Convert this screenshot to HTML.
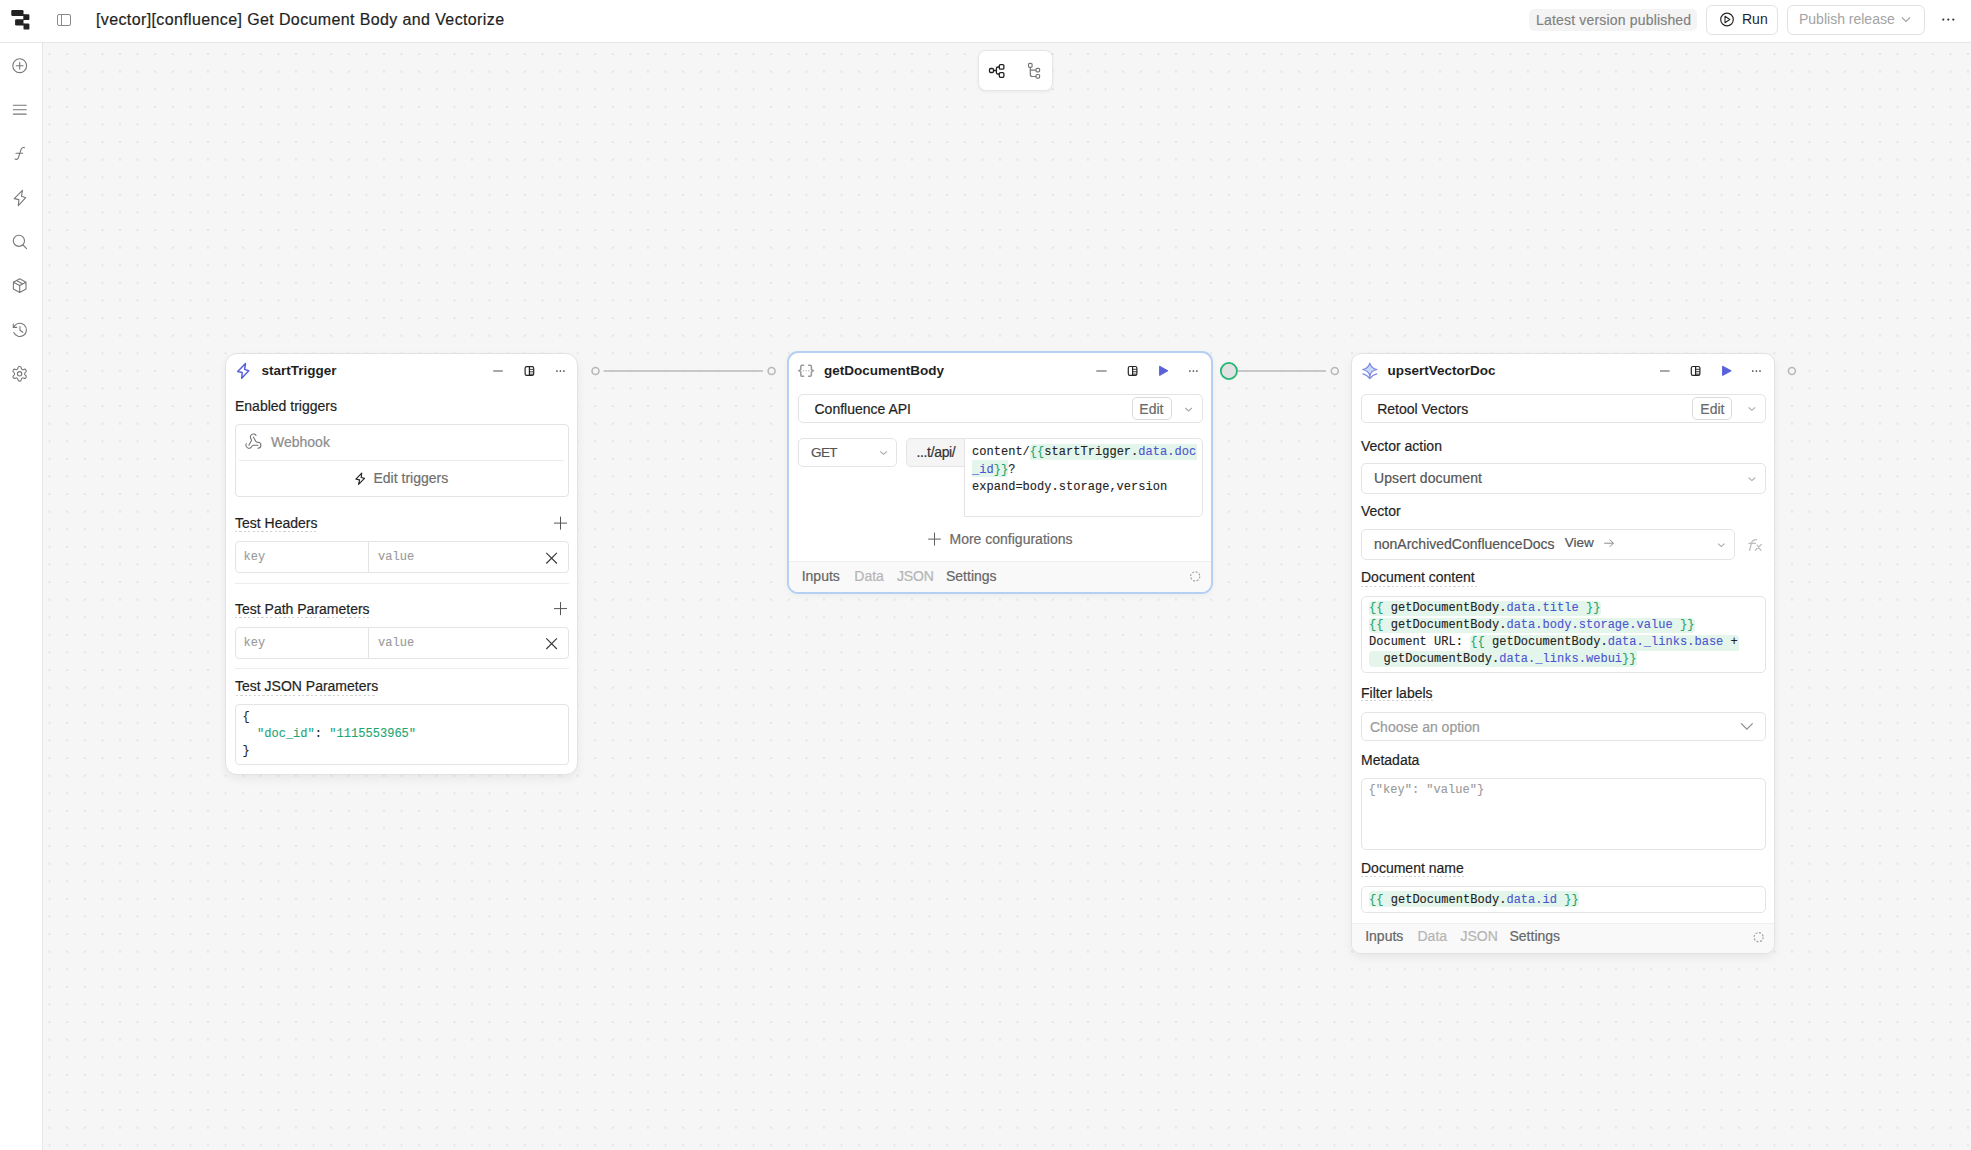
<!DOCTYPE html>
<html><head><meta charset="utf-8">
<style>
*{box-sizing:border-box;margin:0;padding:0}
html,body{width:1971px;height:1150px;overflow:hidden}
body{position:relative;background:#f6f6f6;font-family:"Liberation Sans",sans-serif;color:#1f1f1f;font-size:14px}
.a{position:absolute}
.t{position:absolute;white-space:pre;line-height:20px}
.m{font-family:"Liberation Mono",monospace;font-size:12px;letter-spacing:0.03px;-webkit-text-stroke:0.12px currentColor}
.node{position:absolute;background:#fff;border:1px solid #e2e2e2;border-radius:10px;box-shadow:0 4px 10px rgba(0,0,0,0.06)}
.box{position:absolute;border:1px solid #e4e4e4;border-radius:4px;background:#fff}
.lbl{position:absolute;white-space:pre;line-height:20px;font-size:14px;color:#1f1f1f;-webkit-text-stroke:0.2px currentColor}
.ul{position:absolute;height:1px;background:repeating-linear-gradient(90deg,#d2d2d2 0 2.2px,transparent 2.2px 4.4px)}
.sep{position:absolute;height:1px;background:#ececec}
.g{color:#1ea672}
.b{color:#4a55d0}
.hl{background:#e4f5eb;border-radius:3px}
svg{position:absolute;overflow:visible;z-index:5}
</style></head>
<body>
<!-- canvas dots -->
<svg class="a" style="left:0;top:0;z-index:0" width="1971" height="1150">
<defs><pattern id="dots" x="40.8" y="45.2" width="17.6" height="17.6" patternUnits="userSpaceOnUse"><circle cx="8.8" cy="8.8" r="0.85" fill="#d3d3d3"/></pattern></defs>
<rect x="43" y="43" width="1928" height="1107" fill="url(#dots)"/>
</svg>

<!-- header -->
<div class="a" style="left:0;top:0;width:1971px;height:43px;background:#fff;border-bottom:1px solid #e6e6e6"></div>
<svg style="left:0;top:0" width="40" height="40">
<g fill="#222">
<rect x="11.3" y="10.1" width="12.2" height="5.9" rx="1.2"/>
<rect x="23.3" y="14.3" width="6.1" height="5.8" rx="1.2"/>
<rect x="15.1" y="19.3" width="8.4" height="6.1" rx="1.2"/>
<rect x="23.5" y="23.5" width="5.9" height="6.1" rx="1.2"/>
<rect x="22.5" y="14.3" width="2" height="1.7"/>
<rect x="22.5" y="19.3" width="2" height="0.8"/>
<rect x="22.5" y="23.5" width="2" height="1.9"/>
</g>
</svg>
<svg style="left:0;top:0" width="80" height="40">
<rect x="57.5" y="14.5" width="13" height="11" rx="1.5" fill="none" stroke="#8a8a8a" stroke-width="1"/>
<line x1="61.5" y1="14.5" x2="61.5" y2="25.5" stroke="#8a8a8a" stroke-width="1"/>
</svg>
<div class="t" style="left:96px;top:9.7px;font-size:16px;letter-spacing:0.38px;color:#1f1f1f;-webkit-text-stroke:0.2px #1f1f1f">[vector][confluence] Get Document Body and Vectorize</div>

<!-- header right -->
<div class="a" style="left:1529px;top:9px;width:168px;height:22px;background:#f4f4f4;border-radius:5px"></div>
<div class="t" style="left:1536px;top:10px;font-size:14px;color:#808080;letter-spacing:0.18px;-webkit-text-stroke:0.15px #808080">Latest version published</div>
<div class="a" style="left:1706px;top:5px;width:72px;height:30px;border:1px solid #e2e2e2;border-radius:6px;background:#fff"></div>
<svg style="left:0;top:0" width="1800" height="40">
<circle cx="1727" cy="19.5" r="6.3" fill="none" stroke="#2a2a2a" stroke-width="1.2"/>
<path d="M1725 16.3 L1729.8 19.5 L1725 22.7 Z" fill="none" stroke="#2a2a2a" stroke-width="1.1" stroke-linejoin="round"/>
</svg>
<div class="t" style="left:1742px;top:9px;font-size:14px;color:#1f1f1f">Run</div>
<div class="a" style="left:1787px;top:5px;width:138px;height:30px;border:1px solid #e2e2e2;border-radius:6px;background:#fff"></div>
<div class="t" style="left:1799px;top:9px;font-size:14px;color:#a3a3a3">Publish release</div>
<svg style="left:0;top:0" width="1971" height="40">
<path d="M1902 17.5 L1906 21.5 L1910 17.5" fill="none" stroke="#a3a3a3" stroke-width="1.1"/>
<circle cx="1943.3" cy="19.6" r="1.1" fill="#333"/><circle cx="1948.3" cy="19.6" r="1.1" fill="#333"/><circle cx="1953.3" cy="19.6" r="1.1" fill="#333"/>
</svg>

<!-- sidebar -->
<div class="a" style="left:0;top:43px;width:43px;height:1107px;background:#fff;border-right:1px solid #e6e6e6"></div>
<svg style="left:0;top:0" width="43" height="400">
<g fill="none" stroke="#777" stroke-width="1.1" stroke-linecap="round" stroke-linejoin="round">
<circle cx="19.7" cy="65.7" r="6.9"/><path d="M19.7 62.3v6.8M16.3 65.7h6.8"/>
<path d="M13.3 105.3h12.9M13.3 109.7h12.9M13.3 114.1h12.9"/>
<path d="M24.5 147.8c-1.3-0.6-2.8 0-3.3 1.3l-2.8 8.6c-0.5 1.5-2 2.1-3.4 1.4M16 153.3h6.7"/>
<path d="M22.4 190.4L14.2 198.6L18.9 199.6L18.3 205.6L25.7 197.7L21.5 196.3Z"/>
<circle cx="18.9" cy="240.8" r="5.6"/><path d="M23 245l3.6 3.6"/>
<path d="M19.7 278.8l6.3 3.4v6.9l-6.3 3.4-6.3-3.4v-6.9z M13.4 282.2l6.3 3.4 6.3-3.4 M19.7 285.6v6.9 M16.5 280.5l6.3 3.4"/>
<path d="M14.3 326.3a6.6 6.6 0 1 1-0.5 6.2 M13.3 324v3.4h3.4 M20 326.5v3.8l2.7 2"/>
<g transform="translate(10.8 365) scale(0.735)" stroke-width="1.5"><path d="M12.22 2h-.44a2 2 0 0 0-2 2v.18a2 2 0 0 1-1 1.73l-.43.25a2 2 0 0 1-2 0l-.15-.08a2 2 0 0 0-2.73.73l-.22.38a2 2 0 0 0 .73 2.73l.15.1a2 2 0 0 1 1 1.72v.51a2 2 0 0 1-1 1.74l-.15.09a2 2 0 0 0-.73 2.730l.22.38a2 2 0 0 0 2.73.73l.15-.08a2 2 0 0 1 2 0l.43.25a2 2 0 0 1 1 1.73V20a2 2 0 0 0 2 2h.44a2 2 0 0 0 2-2v-.18a2 2 0 0 1 1-1.73l.43-.25a2 2 0 0 1 2 0l.15.08a2 2 0 0 0 2.73-.73l.22-.39a2 2 0 0 0-.73-2.73l-.15-.08a2 2 0 0 1-1-1.74v-.5a2 2 0 0 1 1-1.74l.15-.09a2 2 0 0 0 .73-2.73l-.22-.38a2 2 0 0 0-2.73-.73l-.15.08a2 2 0 0 1-2 0l-.43-.25a2 2 0 0 1-1-1.73V4a2 2 0 0 0-2-2z"/><circle cx="12" cy="12" r="3"/></g>
</g>
</svg>

<!-- top toolbar -->
<div class="a" style="left:977.5px;top:50px;width:75px;height:40.5px;background:#fff;border:1px solid #e6e6e6;border-radius:8px;box-shadow:0 1px 3px rgba(0,0,0,0.06)"></div>
<svg style="left:0;top:0" width="1100" height="100">
<g fill="none" stroke="#1f1f1f" stroke-width="1.3" stroke-linejoin="round">
<rect x="989.5" y="68.5" width="4" height="4" rx="1.2"/>
<rect x="999.3" y="64.6" width="4.6" height="4.6" rx="1.2"/>
<rect x="999.3" y="72.7" width="4.6" height="4.6" rx="1.2"/>
<path d="M993.5 70.5h2.2M999.3 67h-1.3a1.6 1.6 0 0 0-1.6 1.6v3.8a1.6 1.6 0 0 0 1.6 1.6h1.3"/>
</g>
<g fill="none" stroke="#777" stroke-width="1.2" stroke-linejoin="round">
<rect x="1028.5" y="63.3" width="3.6" height="4" rx="1.1"/>
<rect x="1036" y="68.3" width="3.6" height="3.6" rx="1.1"/>
<rect x="1036" y="74.5" width="3.6" height="3.6" rx="1.1"/>
<path d="M1030.3 67.3v7.2a2 2 0 0 0 2 2h3.7M1030.3 70.2h5.7"/>
</g>
</svg>

<!-- connectors -->
<svg style="left:0;top:0" width="1971" height="400">
<g fill="#f6f6f6" stroke="#b8b8b8">
<circle cx="595.5" cy="371" r="3.5" stroke-width="1.6"/>
<line x1="603.6" y1="371" x2="763" y2="371" stroke-width="1.7"/>
<circle cx="771.6" cy="371" r="3.5" stroke-width="1.6"/>
<line x1="1237.5" y1="371" x2="1326" y2="371" stroke-width="1.6"/>
<circle cx="1334.8" cy="371" r="3.5" stroke-width="1.6"/>
<circle cx="1791.9" cy="371" r="3.5" stroke-width="1.6"/>
</g>
<circle cx="1228.9" cy="371" r="8.1" fill="#e2e2e2" stroke="#22b573" stroke-width="1.8"/>
</svg>


<!-- NODE 1: startTrigger -->
<div class="node" style="left:225px;top:353px;width:353px;height:422px;border-radius:12px"></div>
<svg style="left:0;top:0" width="600" height="800">
<path d="M245.5 363.6 L237.7 371.6 L242.2 372.5 L241.7 378.2 L248.7 370.7 L244.6 369.4 Z" fill="none" stroke="#5560d8" stroke-width="1.5" stroke-linejoin="round"/>
<line x1="493.2" y1="371" x2="502.8" y2="371" stroke="#6e6e6e" stroke-width="1.2"/>
<rect x="525.1" y="366.6" width="8.6" height="8.8" rx="1.6" fill="none" stroke="#262626" stroke-width="1.2"/>
<line x1="529.4" y1="366.6" x2="529.4" y2="375.4" stroke="#262626" stroke-width="1.2"/>
<path d="M529.4 369.4h4.3M529.4 371.8h4.3M529.4 374.2h4.3" stroke="#262626" stroke-width="0.9"/>
<circle cx="556.9" cy="371" r="0.85" fill="#333"/><circle cx="560.4" cy="371" r="0.85" fill="#333"/><circle cx="563.9" cy="371" r="0.85" fill="#333"/>
</svg>
<div class="t" style="left:261.5px;top:361.3px;font-size:13.5px;font-weight:bold;color:#1f1f1f">startTrigger</div>
<div class="lbl" style="left:235px;top:396.3px">Enabled triggers</div>
<div class="box" style="left:235px;top:423.5px;width:334px;height:73px"></div>
<div class="sep" style="left:239px;top:460.2px;width:325px;background:#ebebeb"></div>
<svg style="left:0;top:0" width="600" height="800">
<g fill="none" stroke="#6f6f6f" stroke-width="1.4" stroke-linecap="round" stroke-linejoin="round" transform="translate(244.4 432.5) scale(0.75)">
<path d="M18 16.98h-5.99c-1.1 0-1.95.94-2.48 1.9A4 4 0 0 1 2 17c.01-.7.2-1.4.57-2"/>
<path d="m6 17 3.13-5.78c.53-.97.1-2.18-.5-3.1a4 4 0 1 1 6.89-4.06"/>
<path d="m12 6 3.13 5.73C15.66 12.7 16.9 13 18 13a4 4 0 0 1 0 8"/>
</g>
<path d="M361.7 473.1 L355.9 479.1 L359.6 479.9 L358.6 484.3 L364.5 478.3 L361.2 477.5 Z" fill="none" stroke="#2a2a2a" stroke-width="1.2" stroke-linejoin="round"/>
</svg>
<div class="lbl" style="left:271px;top:431.6px;color:#8c8c8c">Webhook</div>
<div class="lbl" style="left:373.5px;top:467.8px;color:#6f6f6f">Edit triggers</div>

<div class="lbl" style="left:235px;top:513px">Test Headers</div>
<div class="ul" style="left:235px;top:531px;width:84px"></div>
<svg style="left:0;top:0" width="600" height="800">
<path d="M560.5 516.6v13M554 523.1h13" stroke="#555" stroke-width="1"/>
<path d="M546.3 552.9l10.6 10.6M556.9 552.9l-10.6 10.6" stroke="#3a3a3a" stroke-width="1.15"/>
<path d="M560.5 602.1v13M554 608.6h13" stroke="#555" stroke-width="1"/>
<path d="M546.3 638.4l10.6 10.6M556.9 638.4l-10.6 10.6" stroke="#3a3a3a" stroke-width="1.15"/>
</svg>
<div class="box" style="left:235px;top:541px;width:334px;height:32px"></div>
<div class="a" style="left:368px;top:542px;width:1px;height:30px;background:#e4e4e4"></div>
<div class="t m" style="left:243.6px;top:548.5px;line-height:17px;color:#9a9a9a">key</div>
<div class="t m" style="left:378px;top:548.7px;line-height:17px;color:#9a9a9a">value</div>
<div class="sep" style="left:235px;top:582.5px;width:334px"></div>

<div class="lbl" style="left:235px;top:598.8px">Test Path Parameters</div>
<div class="ul" style="left:235px;top:617px;width:136px"></div>
<div class="box" style="left:235px;top:627px;width:334px;height:32px"></div>
<div class="a" style="left:368px;top:628px;width:1px;height:30px;background:#e4e4e4"></div>
<div class="t m" style="left:243.6px;top:634.5px;line-height:17px;color:#9a9a9a">key</div>
<div class="t m" style="left:378px;top:634.7px;line-height:17px;color:#9a9a9a">value</div>
<div class="sep" style="left:235px;top:668.3px;width:334px"></div>

<div class="lbl" style="left:235px;top:676.3px">Test JSON Parameters</div>
<div class="ul" style="left:236px;top:694.5px;width:140px"></div>
<div class="box" style="left:235px;top:704px;width:334px;height:61px"></div>
<div class="t m" style="left:242.5px;top:709px;line-height:17px;color:#1f1f1f">{
  <span class="g">"doc_id"</span>: <span class="g">"1115553965"</span>
}</div>


<!-- NODE 2: getDocumentBody -->
<div class="a" style="left:787px;top:351px;width:426px;height:243px;background:#fff;border:2px solid #b6d0f4;border-radius:11px;overflow:hidden;box-shadow:0 2px 6px rgba(0,0,0,0.04)">
<div class="a" style="left:0;top:208px;width:422px;height:33px;background:#f9f9f9;border-top:1px solid #efefef"></div>
</div>
<svg style="left:0;top:0" width="1300" height="600">
<g fill="none" stroke="#999" stroke-width="1.5" stroke-linecap="round" stroke-linejoin="round">
<path d="M803.6 365.2h-1.6a1.2 1.2 0 0 0-1.2 1.2v3.2l-2 1.1 2 1.1v3.2a1.2 1.2 0 0 0 1.2 1.2h1.6"/>
<path d="M808.6 365.2h1.6a1.2 1.2 0 0 1 1.2 1.2v3.2l2 1.1-2 1.1v3.2a1.2 1.2 0 0 1-1.2 1.2h-1.6"/>
</g>
<g fill="#aaa"><circle cx="803.3" cy="370.7" r="0.65"/><circle cx="806.1" cy="370.7" r="0.65"/><circle cx="808.9" cy="370.7" r="0.65"/></g>
<line x1="1096.3" y1="371" x2="1106.6" y2="371" stroke="#6e6e6e" stroke-width="1.2"/>
<rect x="1128.3" y="366.5" width="8.6" height="8.9" rx="1.6" fill="none" stroke="#262626" stroke-width="1.2"/>
<line x1="1132.6" y1="366.5" x2="1132.6" y2="375.4" stroke="#262626" stroke-width="1.2"/>
<path d="M1132.6 369.3h4.3M1132.6 371.7h4.3M1132.6 374.1h4.3" stroke="#262626" stroke-width="0.9"/>
<path d="M1159.6 366.2 L1167.9 370.8 L1159.6 375.5 Z" fill="#5a62d8" stroke="#5a62d8" stroke-width="1" stroke-linejoin="round"/>
<circle cx="1189.9" cy="371" r="0.85" fill="#333"/><circle cx="1193.4" cy="371" r="0.85" fill="#333"/><circle cx="1196.9" cy="371" r="0.85" fill="#333"/>
</svg>
<div class="t" style="left:824px;top:361.3px;font-size:13.5px;font-weight:bold;color:#1f1f1f">getDocumentBody</div>

<div class="box" style="left:798px;top:394px;width:405px;height:29px;border-radius:5px"></div>
<div class="lbl" style="left:814.5px;top:399px;color:#1f1f1f">Confluence API</div>
<div class="box" style="left:1132px;top:396.5px;width:40px;height:23.5px;border-color:#dadada;border-radius:5px"></div>
<div class="lbl" style="left:1139.3px;top:399px;color:#6a6a6a">Edit</div>
<svg style="left:0;top:0" width="1300" height="600">
<path d="M1185.3 408l3.3 3 3.3-3" fill="none" stroke="#a8a8a8" stroke-width="1.1"/>
<path d="M880.3 451.3l3.3 3 3.3-3" fill="none" stroke="#a8a8a8" stroke-width="1.1"/>
<path d="M934.5 532.6v13M928.2 539.1h12.6" stroke="#5f5f5f" stroke-width="1"/>
</svg>

<div class="box" style="left:798px;top:437.5px;width:99px;height:29.5px;border-radius:5px"></div>
<div class="lbl" style="left:811px;top:442.6px;color:#555;font-size:13.5px;letter-spacing:-0.6px">GET</div>
<div class="a" style="left:906px;top:437.5px;width:60px;height:29.5px;background:#f5f5f5;border:1px solid #e4e4e4;border-radius:5px 0 0 5px"></div>
<div class="lbl" style="left:916.5px;top:442.3px;color:#333;letter-spacing:-0.35px">...t/api/</div>
<div class="a" style="left:964px;top:437.5px;width:239px;height:79px;background:#fff;border:1px solid #e4e4e4;border-radius:0 5px 5px 0"></div>
<div class="a hl" style="left:1030px;top:444px;width:167px;height:16px;border-radius:4px 0 0 0"></div>
<div class="a hl" style="left:972px;top:459.8px;width:36px;height:17px;border-radius:0 0 4px 0"></div>
<div class="t m" style="left:972px;top:444.4px;line-height:17.2px;color:#222">content/<span class="g">{{</span>startTrigger.<span class="b">data.doc</span>
<span class="b">_id</span><span class="g">}}</span>?
expand=body.storage,version</div>

<div class="lbl" style="left:949.5px;top:528.6px;color:#6a6a6a">More configurations</div>
<div class="lbl" style="left:801.7px;top:566px;color:#666">Inputs</div>
<div class="lbl" style="left:854.3px;top:566px;color:#b5b5b5">Data</div>
<div class="lbl" style="left:897px;top:566px;color:#b5b5b5;letter-spacing:-0.2px">JSON</div>
<div class="lbl" style="left:946px;top:566px;color:#666">Settings</div>
<svg style="left:0;top:0" width="1300" height="600">
<circle cx="1195.2" cy="576.4" r="4.6" fill="none" stroke="#9a9a9a" stroke-width="1.1" stroke-dasharray="2 1.6"/>
</svg>


<!-- NODE 3: upsertVectorDoc -->
<div class="node" style="left:1351px;top:353px;width:424px;height:600.5px;overflow:hidden">
<div class="a" style="left:0;top:568.5px;width:422px;height:31px;background:#f9f9f9;border-top:1px solid #efefef"></div>
</div>
<div class="t" style="left:1387.4px;top:361.3px;font-size:13.5px;font-weight:bold;color:#1f1f1f">upsertVectorDoc</div>

<div class="box" style="left:1361px;top:394px;width:405px;height:29px;border-radius:5px"></div>
<div class="lbl" style="left:1377.2px;top:399px;color:#1f1f1f">Retool Vectors</div>
<div class="box" style="left:1692px;top:396.5px;width:40px;height:23.5px;border-color:#dadada;border-radius:5px"></div>
<div class="lbl" style="left:1700.3px;top:399px;color:#6a6a6a">Edit</div>

<div class="lbl" style="left:1361px;top:435.7px">Vector action</div>
<div class="box" style="left:1361px;top:463.2px;width:405px;height:30.5px;border-radius:5px"></div>
<div class="lbl" style="left:1374px;top:467.9px;color:#555;letter-spacing:0.1px">Upsert document</div>

<div class="lbl" style="left:1361px;top:500.9px">Vector</div>
<div class="box" style="left:1361px;top:529.4px;width:374px;height:30.2px;border-radius:5px"></div>
<div class="lbl" style="left:1374px;top:534.3px;color:#555">nonArchivedConfluenceDocs</div>
<div class="lbl" style="left:1564.8px;top:533.2px;color:#555;font-size:13.5px">View</div>


<div class="lbl" style="left:1361px;top:567.4px">Document content</div>
<div class="ul" style="left:1361px;top:585.5px;width:116px"></div>
<div class="box" style="left:1361px;top:595.5px;width:405px;height:77.5px;border-radius:5px"></div>
<div class="a hl" style="left:1368.5px;top:600.6px;width:232.5px;height:15.4px;border-radius:4px"></div>
<div class="a hl" style="left:1368.5px;top:617.8px;width:326.5px;height:15.4px;border-radius:4px"></div>
<div class="a hl" style="left:1470.3px;top:635px;width:268.7px;height:16.3px;border-radius:4px 4px 0 0"></div>
<div class="a hl" style="left:1368.5px;top:651.3px;width:268.2px;height:15.7px;border-radius:4px 0 4px 4px"></div>
<div class="t m" style="left:1369px;top:599.5px;line-height:17.1px;color:#222"><span class="g">{{</span> getDocumentBody.<span class="b">data.title</span> <span class="g">}}</span>
<span class="g">{{</span> getDocumentBody.<span class="b">data.body.storage.value</span> <span class="g">}}</span>
Document URL: <span class="g">{{</span> getDocumentBody.<span class="b">data._links.base</span> +
  getDocumentBody.<span class="b">data._links.webui</span><span class="g">}}</span></div>

<div class="lbl" style="left:1361px;top:683.2px">Filter labels</div>
<div class="ul" style="left:1361px;top:700px;width:72px"></div>
<div class="box" style="left:1361px;top:711.5px;width:405px;height:29.5px;border-radius:5px"></div>
<div class="lbl" style="left:1370px;top:717.2px;color:#9a9a9a">Choose an option</div>

<div class="lbl" style="left:1361px;top:749.8px">Metadata</div>
<div class="box" style="left:1361px;top:777.5px;width:405px;height:72.5px;border-radius:5px"></div>
<div class="t m" style="left:1368.5px;top:782.3px;line-height:17px;color:#9a9a9a">{"key": "value"}</div>

<div class="lbl" style="left:1361px;top:858.1px">Document name</div>
<div class="ul" style="left:1361px;top:875.5px;width:103px"></div>
<div class="box" style="left:1361px;top:885.5px;width:405px;height:27.5px;border-radius:5px"></div>
<div class="a hl" style="left:1368.5px;top:891.2px;width:210.3px;height:15.4px;border-radius:4px"></div>
<div class="t m" style="left:1369px;top:891.5px;line-height:17.1px;color:#222"><span class="g">{{</span> getDocumentBody.<span class="b">data.id</span> <span class="g">}}</span></div>

<div class="lbl" style="left:1365.2px;top:926px;color:#666">Inputs</div>
<div class="lbl" style="left:1417.5px;top:926px;color:#b5b5b5">Data</div>
<div class="lbl" style="left:1460.5px;top:926px;color:#b5b5b5">JSON</div>
<div class="lbl" style="left:1509.5px;top:926px;color:#666">Settings</div>

<svg style="left:0;top:0" width="1971" height="1000">
<g stroke="#8088e0" stroke-width="1.2" stroke-linejoin="round" stroke-linecap="round">
<path d="M1369.8 363.1 Q1371.1 368.2 1376.9 369.5 Q1371.1 370.8 1369.8 375.6 Q1368.5 370.8 1362.7 369.5 Q1368.5 368.2 1369.8 363.1 Z" fill="#c6d9f6"/>
<path d="M1369.8 374v4.6M1362.8 373.8q4.3 1 7 4.8q2.7-3.8 7-4.8" fill="none"/>
</g>
<line x1="1660" y1="371" x2="1669.6" y2="371" stroke="#6e6e6e" stroke-width="1.2"/>
<rect x="1691.3" y="366.5" width="8.6" height="8.9" rx="1.6" fill="none" stroke="#262626" stroke-width="1.2"/>
<line x1="1695.6" y1="366.5" x2="1695.6" y2="375.4" stroke="#262626" stroke-width="1.2"/>
<path d="M1695.6 369.3h4.3M1695.6 371.7h4.3M1695.6 374.1h4.3" stroke="#262626" stroke-width="0.9"/>
<path d="M1722.6 366.2 L1731.2 370.8 L1722.6 375.5 Z" fill="#5a62d8" stroke="#5a62d8" stroke-width="1" stroke-linejoin="round"/>
<circle cx="1752.8" cy="371" r="0.85" fill="#333"/><circle cx="1756.4" cy="371" r="0.85" fill="#333"/><circle cx="1760" cy="371" r="0.85" fill="#333"/>
<path d="M1748.6 407.3l3.3 3 3.3-3" fill="none" stroke="#a8a8a8" stroke-width="1.1"/>
<path d="M1748.6 477.6l3.3 3 3.3-3" fill="none" stroke="#a8a8a8" stroke-width="1.1"/>
<path d="M1718 543.6l3.3 3 3.3-3" fill="none" stroke="#a8a8a8" stroke-width="1.1"/>
<path d="M1604.2 543.2h9.2M1609.8 539.6l3.6 3.6-3.6 3.6" fill="none" stroke="#8a8a8a" stroke-width="1"/>
<g fill="none" stroke="#bdbdbd" stroke-width="1.3" stroke-linecap="round">
<path d="M1749.6 550.4L1751.6 542.6Q1752.6 539.6 1756.7 539.6"/>
<path d="M1749 543.4h6.4"/>
<path d="M1757.1 545l3.8 5.4M1761.3 544.5l-6.1 5.9"/>
</g>
<path d="M1741.1 723.4L1746.9 729.2L1752.7 723.4" fill="none" stroke="#8f8f8f" stroke-width="1.3"/>
<circle cx="1758.6" cy="937.2" r="4.6" fill="none" stroke="#9a9a9a" stroke-width="1.1" stroke-dasharray="2 1.6"/>
</svg>

<!-- NODES_PLACEHOLDER -->
</body></html>
